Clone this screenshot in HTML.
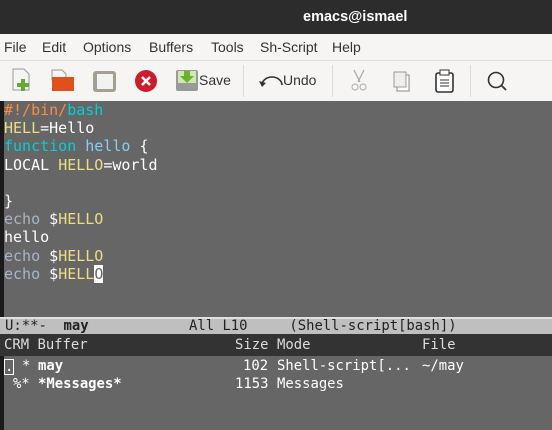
<!DOCTYPE html>
<html><head><style>
*{margin:0;padding:0;box-sizing:border-box}
body{width:552px;height:430px;overflow:hidden;background:#666;font-family:"Liberation Sans",sans-serif;position:relative}
.title{position:absolute;left:0;top:0;width:552px;height:34px;background:#2c2c2c;color:#fff;font-weight:bold;font-size:14.5px;line-height:34px}
.menu{position:absolute;top:34px;left:0;width:552px;height:26px;background:#f6f5f4;font-size:14px;color:#333}
.menu span{position:absolute;top:5px}
.tool{position:absolute;top:60px;left:0;width:552px;height:41px;background:#f6f5f4;border-top:1px solid #e0dedb}
.tool .sep{position:absolute;top:4px;width:1px;height:32px;background:#dcdad5}
.tool .t{position:absolute;top:11px;font-size:14px;color:#333}
.ed{position:absolute;left:0;top:101px;width:552px;height:216px;background:#666;border-left:4px solid #1a1a1a;font-family:"DejaVu Sans Mono",monospace;font-size:15px;line-height:18.2px;color:#fff;white-space:pre}
.mono{font-family:"DejaVu Sans Mono",monospace;font-size:13.9px;white-space:pre}
.mode{position:absolute;left:0;top:317px;width:552px;height:17px;background:#bfbfbf;border-top:2px solid #e0e0e0;line-height:15px;color:#222;padding-left:5px}
.hdr{position:absolute;left:0;top:334px;width:552px;height:22px;background:#333;color:#ddd}
.hdr span{position:absolute;top:3px}
.bl{position:absolute;left:0;top:356px;width:552px;height:74px;background:#666;border-left:4px solid #1a1a1a;color:#fff}
.bl span{position:absolute}
.o{color:#ff8c3a}.c{color:#00d0d8}.y{color:#eedd82}.b{color:#87cefa}.g{color:#a8b4c8}
.cur{background:#fff;color:#666}
</style></head><body>
<div class="title"><span style="position:absolute;left:303px">emacs@ismael</span></div>
<div class="menu"><span style="left:4px">File</span><span style="left:42px">Edit</span><span style="left:83px">Options</span><span style="left:149px">Buffers</span><span style="left:211px">Tools</span><span style="left:260px">Sh-Script</span><span style="left:332px">Help</span></div>
<div class="tool">
<svg width="552" height="40" style="position:absolute;left:0;top:0">
<path d="M13 8h11l5 5v16h-16z" fill="#f4f4f4" stroke="#999"/>
<rect x="21" y="18" width="4" height="12" fill="#6a3"/><rect x="17" y="22" width="12" height="4" fill="#6a3"/>
<path d="M52 9h10l4 4v6h-14z" fill="#f4f4f4" stroke="#999"/>
<rect x="52" y="16" width="22" height="14" fill="#e0501a"/>
<rect x="93" y="10" width="23" height="21" rx="3" fill="#a59f93"/><rect x="97" y="13" width="16" height="15" fill="#f2f2f2"/>
<circle cx="146" cy="20" r="11" fill="#cc1d2c"/><path d="M142 16l8 8M150 16l-8 8" stroke="#fff" stroke-width="2.5"/>
<rect x="176" y="9" width="22" height="21" rx="2" fill="#999"/><rect x="178" y="10" width="18" height="12" fill="#cfe8b0"/><path d="M184 10h6v5h4l-7 7-7-7h4z" fill="#6ab12e"/>
<path d="M262 24a10 8 0 0 1 20 0" fill="none" stroke="#333" stroke-width="1.6"/><path d="M259 20l3 6 4-4z" fill="#333"/>
<path d="M354 9l6 12M364 9l-6 12" stroke="#aaa" stroke-width="1.3"/><circle cx="355" cy="26" r="3" fill="none" stroke="#aaa"/><circle cx="363" cy="26" r="3" fill="none" stroke="#aaa"/>
<rect x="397" y="14" width="12" height="16" fill="#fff" stroke="#888"/><rect x="394" y="11" width="12" height="15" fill="#eee" stroke="#999"/>
<rect x="436" y="12" width="17" height="19" rx="2" fill="#fff" stroke="#333" stroke-width="1.6"/><rect x="440" y="9" width="9" height="5" fill="#fff" stroke="#333"/><path d="M440 19h9M440 22h9M440 25h9" stroke="#333"/>
<circle cx="496" cy="19" r="7.5" fill="none" stroke="#333" stroke-width="1.6"/><path d="M501 24l5 5" stroke="#333" stroke-width="1.8"/>
</svg>
<div class="t" style="left:199px">Save</div>
<div class="t" style="left:283px">Undo</div>
<div class="sep" style="left:243px"></div><div class="sep" style="left:332px"></div><div class="sep" style="left:470px"></div>
</div>
<div class="ed"><span class="o">#!/bin/</span><span class="c">bash</span>
<span class="y">HELL</span>=Hello
<span class="c">function</span> <span class="b">hello</span> {
LOCAL <span class="y">HELLO</span>=world

}
<span class="g">echo</span> $<span class="y">HELLO</span>
hello
<span class="g">echo</span> $<span class="y">HELLO</span>
<span class="g">echo</span> $<span class="y">HELL</span><span class="cur">O</span></div>
<div class="mode mono">U:**-  <b>may</b>            All L10     (Shell-script[bash])</div>
<div class="hdr mono"><span style="left:4px">CRM Buffer</span><span style="left:235px">Size</span><span style="left:277px">Mode</span><span style="left:422px">File</span></div>
<div class="bl mono">
<span style="left:1px;top:2px;outline:1px solid #fff;line-height:14px;top:4px">.</span><span style="left:18px;top:2px">*</span><span style="left:34px;top:2px;font-weight:bold">may</span><span style="left:239px;top:2px">102</span><span style="left:273px;top:2px">Shell-script[...</span><span style="left:418px;top:2px">~/may</span>
<span style="left:9px;top:20px">%*</span><span style="left:34px;top:20px;font-weight:bold">*Messages*</span><span style="left:231px;top:20px">1153</span><span style="left:273px;top:20px">Messages</span>
</div>
</body></html>
